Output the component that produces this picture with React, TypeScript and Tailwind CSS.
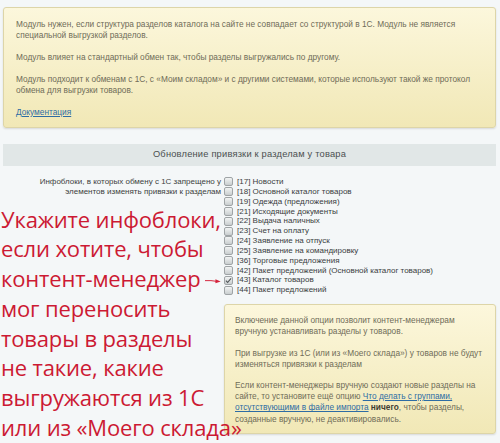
import React from "react";

const iblocks: { id: number; name: string; checked?: boolean }[] = [
    {id: 17, name: "Новости"},
    {id: 18, name: "Основной каталог товаров"},
    {id: 19, name: "Одежда (предложения)"},
    {id: 21, name: "Исходящие документы"},
    {id: 22, name: "Выдача наличных"},
    {id: 23, name: "Счет на оплату"},
    {id: 24, name: "Заявление на отпуск"},
    {id: 25, name: "Заявление на командировку"},
    {id: 36, name: "Торговые предложения"},
    {id: 42, name: "Пакет предложений (Основной каталог товаров)"},
    {id: 43, name: "Каталог товаров", checked: true},
    {id: 44, name: "Пакет предложений"},
];

const hint = [
    "Укажите инфоблоки,",
    "если хотите, чтобы",
    "контент-менеджер",
    "мог переносить",
    "товары в разделы",
    "не такие, какие",
    "выгружаются из 1С",
    "или из «Моего склада»",
];

function Box({children, className = ""}: { children: React.ReactNode; className?: string }) {
    return (
        <div
            className={`rounded-[3px] border border-[#ddd5a8] bg-gradient-to-b from-[#fcf7dc] to-[#f1e8b6]
                        shadow-[0_1px_2px_rgba(0,0,0,0.12)] text-[#6f6c58] whitespace-nowrap ${className}`}
        >
            {children}
        </div>
    );
}

function Checkbox({checked}: { checked?: boolean }) {
    return (
        <span
            className="w-[9px] h-[9px] shrink-0 rounded-[2px] border border-[#9fa4a6]
                       bg-gradient-to-b from-[#f2f4f4] to-[#c9cecf] grid place-items-center"
        >
            {checked && (
                <svg viewBox="0 0 8 8" className="w-[7px] h-[7px]">
                    <path d="M1 4.2 L3 6.2 L7 1.5" fill="none" stroke="#55595b" strokeWidth="1.2"/>
                </svg>
            )}
        </span>
    );
}

export default function App() {
    return (
        <div className="w-[500px] h-[443px] overflow-hidden bg-[#f4f7f8] pl-[3px] pr-[4px] pt-[7px] font-['Liberation_Sans',Arial,sans-serif]">
            {/* Intro */}
            <Box className="pl-[12px] pr-3 pt-[11px] pb-[9px] flex flex-col gap-[11px] text-[8.3px] leading-[11px]">
                <p>
                    Модуль нужен, если структура разделов каталога на сайте не совпадает со структурой в 1С. Модуль не является<br/>
                    специальной выгрузкой разделов.
                </p>
                <p>Модуль влияет на стандартный обмен так, чтобы разделы выгружались по другому.</p>
                <p>
                    Модуль подходит к обменам с 1С, с «Моим складом» и с другими системами, которые используют такой же протокол<br/>
                    обмена для выгрузки товаров.
                </p>
                <a href="#" className="text-[#2e6ca4] underline w-fit">Документация</a>
            </Box>

            {/* Section header */}
            <div className="mt-[16px] h-[22px] bg-[#e1e7e7] flex items-center justify-center text-[9.3px] text-[#4b4f50] tracking-[0.2px]">
                Обновление привязки к разделам у товара
            </div>

            {/* Field row */}
            <div className="mt-[11px] flex">
                <div className="w-[218px] shrink-0 relative z-10">
                    <div className="text-right text-[8px] text-[#3c3f40] leading-[9.85px]">
                        Инфоблоки, в которых обмену с 1С запрещено у<br/>
                        элементов изменять привязки к разделам
                    </div>
                    <div className="mt-[8px] -ml-[2px] font-['Open_Sans',sans-serif] text-[22px] leading-[29.7px] text-[#cc1a33] whitespace-nowrap tracking-[-0.15px]">
                        {hint.map((line, i) => (
                            <div key={i} className="flex items-center">
                                {line}
                                {i === 2 && (
                                    <svg viewBox="0 0 22 8" className="ml-[4px] mt-[4px] w-[22px] h-[8px]">
                                        <path d="M0 3.5 Q8 3 16 4.5" fill="none" stroke="#d4213a" strokeWidth="1.3"/>
                                        <path d="M14 1.5 L21 4.8 L14 7 Z" fill="#d4213a"/>
                                    </svg>
                                )}
                            </div>
                        ))}
                    </div>
                </div>

                <div className="flex-1 pl-[3px]">
                    <div className="flex flex-col text-[8px] text-[#3a3d3e]">
                        {iblocks.map((ib) => (
                            <label key={ib.id} className="flex items-center gap-[4px] h-[9.85px] leading-[9.85px]">
                                <Checkbox checked={ib.checked}/>
                                <span>[{ib.id}] {ib.name}</span>
                            </label>
                        ))}
                    </div>

                    <Box className="mt-[9px] pl-[10px] pr-[8px] pt-[10px] pb-[8px] flex flex-col gap-[10px] text-[8.3px] leading-[11.2px]">
                        <p>
                            Включение данной опции позволит контент-менеджерам<br/>
                            вручную устанавливать разделы у товаров.
                        </p>
                        <p>
                            При выгрузке из 1С (или из «Моего склада») у товаров не будут<br/>
                            изменяться привязки к разделам
                        </p>
                        <p>
                            Если контент-менеджеры вручную создают новые разделы на<br/>
                            сайте, то установите ещё опцию{" "}
                            <a href="#" className="text-[#2e6ca4] underline">Что делать с группами,<br/>
                                отсутствующими в файле импорта</a>{" "}
                            <b className="text-[#3f3d33]">ничего</b>, чтобы разделы,<br/>
                            созданные вручную, не деактивировались.
                        </p>
                    </Box>
                </div>
            </div>
        </div>
    );
}
